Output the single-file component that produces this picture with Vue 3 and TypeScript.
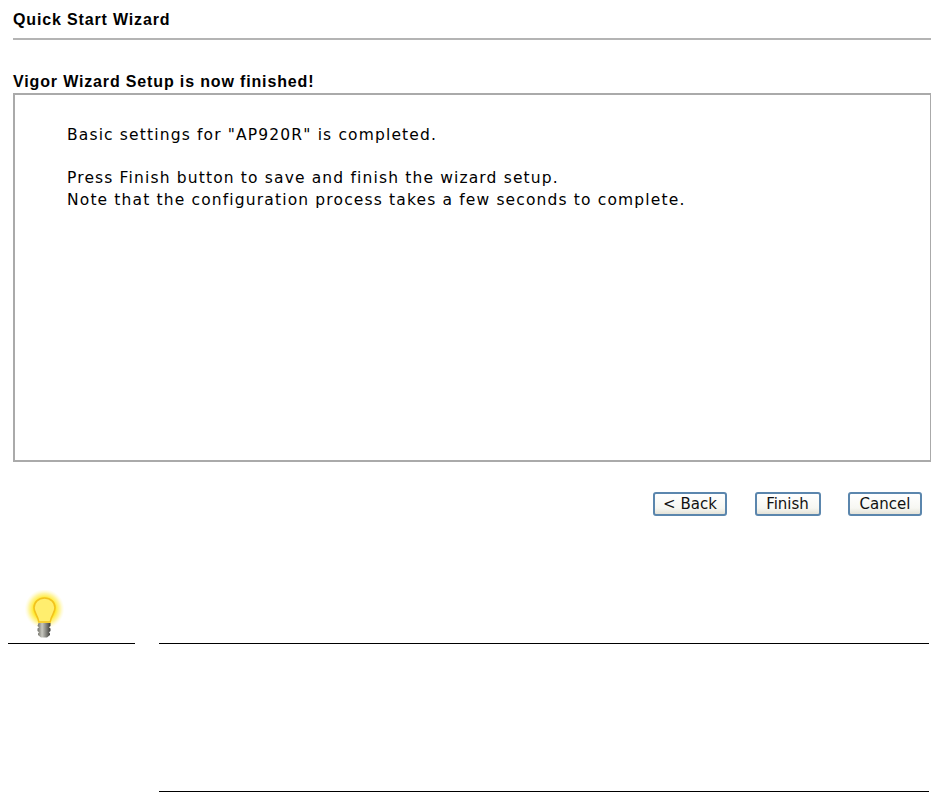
<script setup lang="ts">
const lines = [
  'Basic settings for "AP920R" is completed.',
  '',
  'Press Finish button to save and finish the wizard setup.',
  'Note that the configuration process takes a few seconds to complete.',
];
const buttons = ['< Back', 'Finish', 'Cancel'];
</script>

<template>
  <div class="page">
    <div class="title">Quick Start Wizard</div>
    <div class="subtitle">Vigor Wizard Setup is now finished!</div>
    <div class="box">
      <div v-for="(line, i) in lines" :key="i" class="line">{{ line }}</div>
    </div>
    <div class="actions">
      <button v-for="b in buttons" :key="b" class="btn">{{ b }}</button>
    </div>
    <div class="note">
      <div class="note-left">
        <svg class="bulb" width="40" height="50" viewBox="0 0 40 50">
          <defs>
            <radialGradient id="glow" cx="50%" cy="50%" r="50%">
              <stop offset="0%" stop-color="#ffe900" />
              <stop offset="55%" stop-color="#ffe92a" />
              <stop offset="78%" stop-color="#fff06a" stop-opacity="0.6" />
              <stop offset="100%" stop-color="#fff8c0" stop-opacity="0" />
            </radialGradient>
            <linearGradient id="base" x1="0" y1="0" x2="1" y2="0">
              <stop offset="0%" stop-color="#6f6f66" />
              <stop offset="35%" stop-color="#c8c8c0" />
              <stop offset="100%" stop-color="#3c3c38" />
            </linearGradient>
          </defs>
          <circle cx="19.500" cy="19" r="20" fill="url(#glow)" />
          <path d="M19.500 8c-6.200 0-10.500 4.300-10.500 9.800 0 5.200 3.900 7.400 4.800 14.200h11.400c.9-6.800 4.800-9 4.800-14.200C30 12.300 25.700 8 19.500 8z" fill="#ffee6e" stroke="#f2c21e" stroke-width="1.600" />
          <path d="M13.500 33h12v3l-1.500 1.200 1.500 1.300v2.500l-1.500 1.200 1 1.300v1.500l-3 2.500h-6l-3-2.500v-1.500l1-1.300-1.500-1.200v-2.500l1.500-1.300-1.500-1.200z" fill="url(#base)" />
        </svg>
      </div>
      <div class="note-right"></div>
    </div>
  </div>
</template>

<style scoped>
.page {
  width: 945px;
  height: 792px;
  box-sizing: border-box;
  padding-top: 12px;
  overflow: hidden;
  background: #fff;
  color: #000;
}
.title {
  margin-left: 13px;
  width: 918px;
  height: 26px;
  border-bottom: 2px solid #b4b4b4;
  font: bold 16px/15px "Liberation Sans", Arial, sans-serif;
  letter-spacing: 0.850px;
}
.subtitle {
  margin: 34px 0 0 13px;
  height: 19px;
  font: bold 16px/15px "Liberation Sans", Arial, sans-serif;
  letter-spacing: 0.850px;
}
.box {
  margin-left: 13px;
  width: 918px;
  height: 369px;
  box-sizing: border-box;
  border: 2px solid #aaa;
  border-right-width: 1px;
  padding: 30px 0 0 52px;
  font: 15.500px/21.500px "DejaVu Sans", Verdana, sans-serif;
  letter-spacing: 1.150px;
}
.line {
  min-height: 21.500px;
  white-space: pre;
}
.actions {
  display: flex;
  justify-content: flex-end;
  gap: 27.500px;
  margin: 30px 23px 0 0;
}
.btn {
  width: 74px;
  height: 24px;
  padding: 0;
  border: 2px solid #5b86ad;
  border-radius: 3px;
  background: linear-gradient(#fff, #f7f7f2 70%, #e4e2d8);
  color: #111;
  font: 15px/20px "DejaVu Sans", Verdana, sans-serif;
}
.btn:nth-child(2) {
  width: 66px;
}
.note {
  display: flex;
  margin-top: 78px;
  align-items: flex-start;
}
.note-left {
  position: relative;
  margin-left: 8px;
  width: 127px;
  height: 49px;
  border-bottom: 1px solid #000;
}
.bulb {
  position: absolute;
  left: 17px;
  top: -4px;
}
.note-right {
  margin: 49px 0 0 24px;
  width: 770px;
  height: 147px;
  border-top: 1px solid #000;
  border-bottom: 1px solid #000;
}
</style>
